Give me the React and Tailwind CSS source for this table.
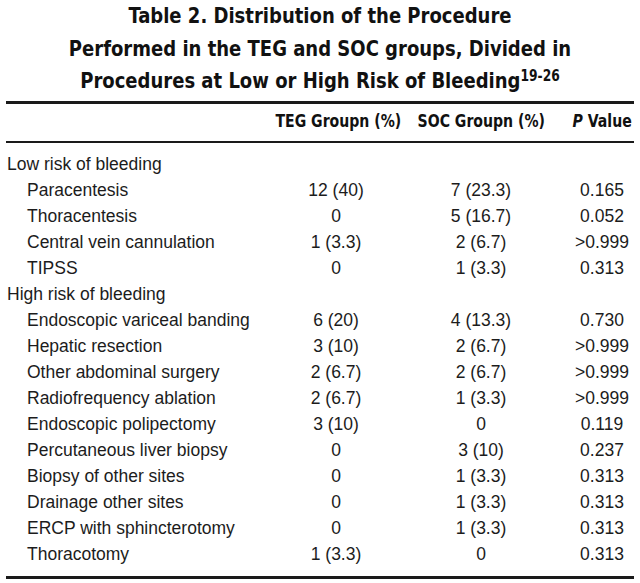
import React from 'react';

const rows = [
  { label: 'Low risk of bleeding', group: true },
  { label: 'Paracentesis', teg: '12 (40)', soc: '7 (23.3)', p: '0.165' },
  { label: 'Thoracentesis', teg: '0', soc: '5 (16.7)', p: '0.052' },
  { label: 'Central vein cannulation', teg: '1 (3.3)', soc: '2 (6.7)', p: '>0.999' },
  { label: 'TIPSS', teg: '0', soc: '1 (3.3)', p: '0.313' },
  { label: 'High risk of bleeding', group: true },
  { label: 'Endoscopic variceal banding', teg: '6 (20)', soc: '4 (13.3)', p: '0.730' },
  { label: 'Hepatic resection', teg: '3 (10)', soc: '2 (6.7)', p: '>0.999' },
  { label: 'Other abdominal surgery', teg: '2 (6.7)', soc: '2 (6.7)', p: '>0.999' },
  { label: 'Radiofrequency ablation', teg: '2 (6.7)', soc: '1 (3.3)', p: '>0.999' },
  { label: 'Endoscopic polipectomy', teg: '3 (10)', soc: '0', p: '0.119' },
  { label: 'Percutaneous liver biopsy', teg: '0', soc: '3 (10)', p: '0.237' },
  { label: 'Biopsy of other sites', teg: '0', soc: '1 (3.3)', p: '0.313' },
  { label: 'Drainage other sites', teg: '0', soc: '1 (3.3)', p: '0.313' },
  { label: 'ERCP with sphincterotomy', teg: '0', soc: '1 (3.3)', p: '0.313' },
  { label: 'Thoracotomy', teg: '1 (3.3)', soc: '0', p: '0.313' },
];

const grid = 'grid grid-cols-[264px_132px_158px_74px]';
const head = 'inline-block scale-x-[0.92] whitespace-nowrap';

export default function App() {
  return (
    <div className="w-[640px] h-[583px] bg-white overflow-hidden text-[#1c1c1c]">
      <h1 className="text-center font-bold text-[22px] leading-[32.5px] text-[#111] scale-x-[0.91] font-['DejaVu_Sans_Condensed','Liberation_Sans',sans-serif]">
        <div>Table 2. Distribution of the Procedure</div>
        <div>Performed in the TEG and SOC groups, Divided in</div>
        <div>
          Procedures at Low or High Risk of Bleeding
          <sup className="text-[15px]">19-26</sup>
        </div>
      </h1>

      <div className="mx-[6px] mt-[3px] border-t-[3px] border-[#1a1a1a]" />
      <div className={`${grid} mx-[6px] h-[37px] items-center font-bold text-[17px] text-[#111] font-['DejaVu_Sans_Condensed','Liberation_Sans',sans-serif]`}>
        <div />
        <div className="text-center"><span className={head}>TEG Groupn (%)</span></div>
        <div className="text-center"><span className={head}>SOC Groupn (%)</span></div>
        <div className="text-center pl-[10px]">
          <span className={head}><i>P</i> Value</span>
        </div>
      </div>
      <div className="mx-[6px] border-t-2 border-[#1a1a1a]" />

      <div className="mx-[6px] pt-[8px] font-['Liberation_Sans',Arial,sans-serif] text-[17.5px]">
        {rows.map((r) => (
          <div key={r.label} className={`${grid} h-[26px] items-center`}>
            <div className={r.group ? 'pl-[1px]' : 'pl-[21px]'}>{r.label}</div>
            <div className="text-center">{r.teg}</div>
            <div className="text-center">{r.soc}</div>
            <div className="text-center pl-[10px]">{r.p}</div>
          </div>
        ))}
      </div>
      <div className="mx-[6px] mt-[9px] border-t-[3px] border-[#1a1a1a]" />
    </div>
  );
}
